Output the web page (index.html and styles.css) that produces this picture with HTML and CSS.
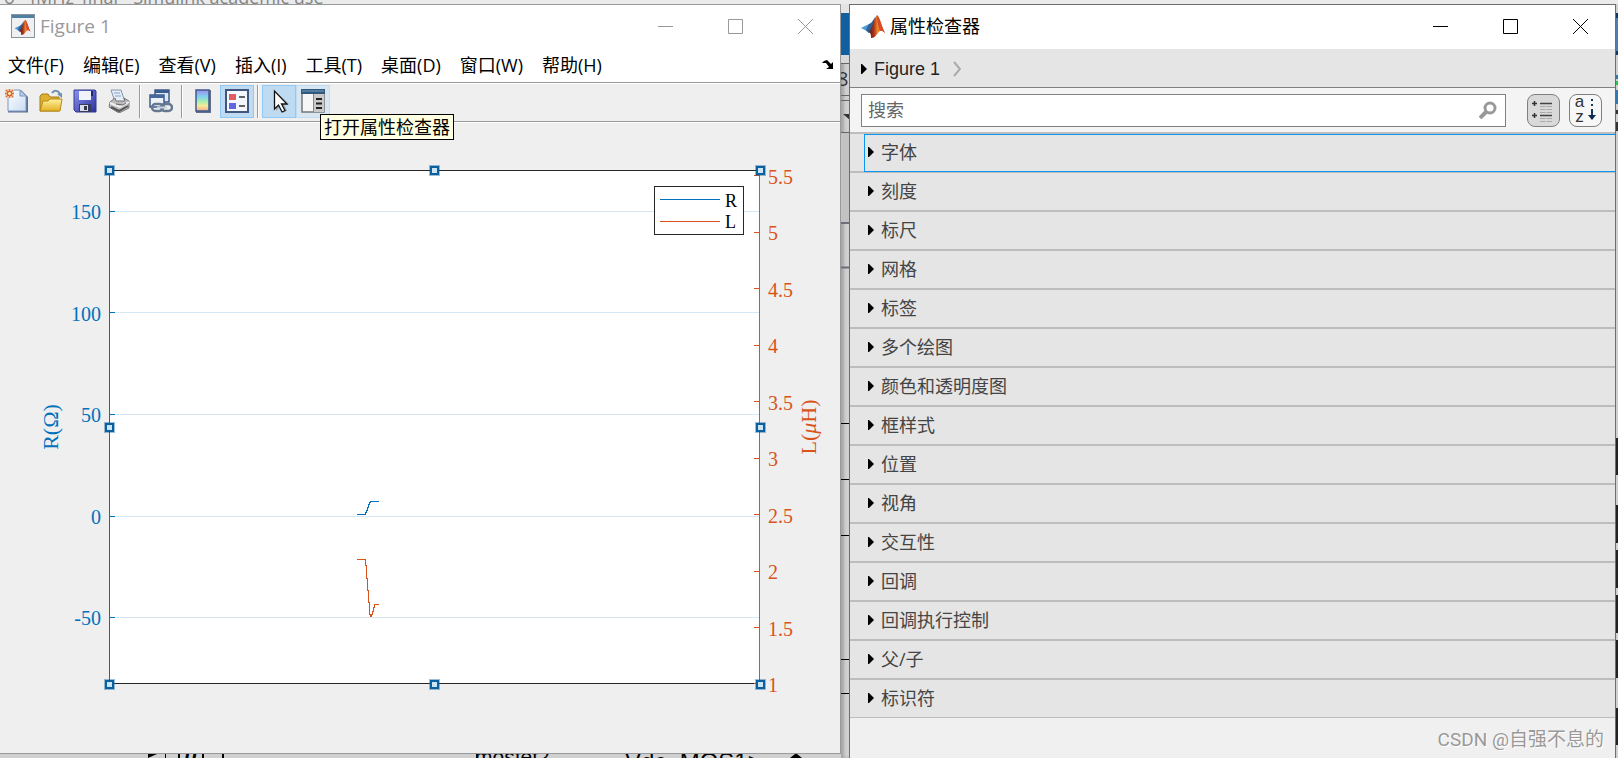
FILE: index.html
```html
<!DOCTYPE html>
<html lang="zh-CN">
<head>
<meta charset="utf-8">
<title>Figure 1</title>
<link rel="stylesheet" href="styles.css">
</head>
<body>
<svg class="defs" width="0" height="0" aria-hidden="true">
  <defs>
    <linearGradient id="flame" x1="0" x2="1" y1="0" y2="0">
      <stop offset="0" stop-color="#5a1a1a"/><stop offset=".3" stop-color="#a8321a"/><stop offset=".55" stop-color="#f08c28"/><stop offset="1" stop-color="#c8281e"/>
    </linearGradient>
    <linearGradient id="jet" x1="0" x2="0" y1="0" y2="1">
      <stop offset="0" stop-color="#a58bea"/><stop offset=".3" stop-color="#7fd0f0"/><stop offset=".55" stop-color="#a8eeb0"/><stop offset=".75" stop-color="#f5ec9a"/><stop offset="1" stop-color="#f5a98a"/>
    </linearGradient>
    <linearGradient id="paper" x1="0" x2="1" y1="0" y2="1">
      <stop offset="0" stop-color="#fff"/><stop offset="1" stop-color="#c9dcf6"/>
    </linearGradient>
    <linearGradient id="gold" x1="0" x2="0" y1="0" y2="1">
      <stop offset="0" stop-color="#fff3a0"/><stop offset="1" stop-color="#e5b021"/>
    </linearGradient>
    <linearGradient id="disk" x1="0" x2="1" y1="0" y2="1">
      <stop offset="0" stop-color="#8a93f0"/><stop offset="1" stop-color="#2c2f9c"/>
    </linearGradient>
    <symbol id="logo" viewBox="0 0 24 24">
      <path d="M0 14 8 10l4 4-4 5-4-3z" fill="#4a9bd4"/>
      <path d="M8 10c3-1 4-4 6-7l-1 10-5 6-3-3z" fill="#2f5f95"/>
      <path d="M8 18c3-3 5-14 8-17 3 2 5 13 8 18-3-3-5-3-7 0-2 3-4 5-7 5 0-3 0-4-2-6z" fill="url(#flame)"/>
      <path d="M16 1c3 2 5 13 8 18-3-3-4-3-5-2-2-5-3-11-3-16z" fill="#d94a2b"/>
    </symbol>
    <symbol id="tri" viewBox="0 0 7 12"><path d="M0 1h1l5 5-5 5H0z" fill="#000"/></symbol>
  </defs>
</svg>

<div class="desktop">
  <div class="strip-top">o - fMHz_final - Simulink academic use</div>

  <main class="window figure">
    <header class="titlebar">
      <svg class="app-icon" viewBox="0 0 24 24" aria-hidden="true">
        <rect x=".5" y=".5" width="23" height="23" fill="#eef0f2" stroke="#8b9299"/>
        <rect x="1" y="1" width="22" height="3" fill="#4f7fa3"/>
        <use href="#logo" x="3" y="5" width="17" height="16"/>
      </svg>
      <h1>Figure 1</h1>
      <div class="controls">
        <button aria-label="最小化"><svg viewBox="0 0 15 15"><path d="M0 7.5h15"/></svg></button>
        <button aria-label="最大化"><svg viewBox="0 0 15 15"><path d="M.5.5h14v14H.5z"/></svg></button>
        <button aria-label="关闭"><svg viewBox="0 0 15 15"><path d="m0 0 15 15M15 0 0 15"/></svg></button>
      </div>
    </header>
    <nav class="menu">
      <button>文件(F)</button><button>编辑(E)</button><button>查看(V)</button><button>插入(I)</button><button>工具(T)</button><button>桌面(D)</button><button>窗口(W)</button><button>帮助(H)</button>
      <button class="dock" aria-label="停靠"><svg viewBox="0 0 12 10"><path d="M0 3 2 1l3-1 4 4 2-2v7H4l3-2-3-4z" fill="#000"/></svg></button>
    </nav>
    <div class="toolbar">
      <button aria-label="新建图窗"><svg viewBox="0 0 24 24">
        <path d="M3 1h13l7 7v15.500H3z" fill="#5d7092"/><path d="M3 1h12l6 6v15H3z" fill="url(#paper)" stroke="#7e95bd"/><path d="M15 1v6h6z" fill="#b9cdea" stroke="#7e95bd"/>
        <path d="M0 0h9v9H0z" fill="#f6d3ba"/><path d="M4.500 0v9M0 4.500h9M1 1l7 7M8 1 1 8" stroke="#d4703c" stroke-width="1.300"/><circle cx="4.500" cy="4.500" r="2" fill="#fff0a8" stroke="#c8552a"/></svg></button>
      <button aria-label="打开"><svg viewBox="0 0 24 24">
        <path d="M13 4c2-3 6-3 8 1" fill="none" stroke="#6e8fae" stroke-width="2"/><path d="m18 5 5-1v5z" fill="#6e8fae"/>
        <path d="M1 22V7l2-2h6l2 3h9v14z" fill="#dfb02f" stroke="#a67c16"/><path d="M1 22 4 12h5l2-2h12l-2 12z" fill="url(#gold)" stroke="#b58a1c"/></svg></button>
      <button aria-label="保存"><svg viewBox="0 0 24 24">
        <path d="M1 1h21l1 1v21H3l-2-2z" fill="url(#disk)" stroke="#34388f"/><path d="M6 2h12v9H6z" fill="#f1f3fb"/><path d="M18 2h2v5h-2z" fill="#20246e"/><path d="M6 15h12v8H6z" fill="#343a5c"/><path d="M7 16h8v6H7z" fill="#dadde6"/><path d="M11 17h3v4h-3z" fill="#30354f"/></svg></button>
      <button aria-label="打印"><svg viewBox="0 0 24 24">
        <path d="M4 1h10l4 12H8z" fill="#e5edf9" stroke="#8794ad"/><path d="M7 4h6M8 7h6" stroke="#8aa0c6"/><path d="M3 13 8 9l1 3h9l-1-3 5 3v7l-10 5-10-6z" fill="#bcbcbc" stroke="#777"/><path d="m3 14 10 4 9-5" fill="none" stroke="#efefef" stroke-width="2"/><path d="m4 18 8 4 9-5" fill="none" stroke="#555" stroke-width="2"/><path d="m9 15 7 1 3-2" stroke="#666" fill="none"/></svg></button>
      <i class="sep"></i>
      <button aria-label="链接绘图"><svg viewBox="0 0 24 24">
        <path d="M6 1h14v12H6z" fill="#dfe7f2" stroke="#3c5c8c" stroke-width="1.500"/><path d="M6 1h14v3H6z" fill="#3c5c8c"/><path d="M1 6h14v12H1z" fill="#eef2f8" stroke="#3c5c8c" stroke-width="1.500"/><path d="M1 6h14v3H1z" fill="#47689a"/>
        <rect x="3" y="15" width="11" height="7" rx="3.500" fill="none" stroke="#66788f" stroke-width="2.500"/><rect x="12" y="15" width="11" height="7" rx="3.500" fill="none" stroke="#66788f" stroke-width="2.500"/><path d="M8 18.500h10" stroke="#c8d2de" stroke-width="2"/></svg></button>
      <i class="sep"></i>
      <button aria-label="插入颜色栏"><svg viewBox="0 0 24 24"><path d="M5 1h15v23H5z" fill="#62708f"/><path d="M5 1h13v21H5z" fill="url(#jet)" stroke="#40598c" stroke-width="1.500"/></svg></button>
      <button class="on" aria-label="插入图例"><svg viewBox="0 0 24 24"><path d="M1 1h22v22H1z" fill="#f3f6fc" stroke="#41567f" stroke-width="2"/><path d="M4 5h7v6H4z" fill="#e25a62"/><path d="M4 14h7v6H4z" fill="#6264e0"/><path d="M14 8h6M14 17h6" stroke="#333" stroke-width="1.500"/></svg></button>
      <i class="sep"></i>
      <button class="on" aria-label="编辑绘图"><svg viewBox="0 0 24 24"><path d="M9 3v19l4-4 3 6 4-2-3-7h5z" fill="#777" opacity=".5"/><path d="M7.500 2v18l4-4 3.500 7 3-1.500-3.500-6.500H20z" fill="#fff" stroke="#111" stroke-width="1.300"/></svg></button>
      <button class="hover" aria-label="打开属性检查器" aria-describedby="tip"><svg viewBox="0 0 24 24"><path d="M1 1h22v22H1z" fill="#f6f6f6" stroke="#777" stroke-width="1.500"/><path d="M0 0h24v5H0z" fill="#31597d"/><path d="M1 2h22" stroke="#78a1c0"/><path d="M12 5h11v18H12z" fill="#c9c9c9"/><path d="M12.500 5v18" stroke="#888"/><path d="M15 10h6M15 14.500h6M15 19h6" stroke="#222" stroke-width="1.800"/></svg></button>
      <div class="tooltip" id="tip" role="tooltip">打开属性检查器</div>
    </div>

    <svg class="chart" viewBox="0 0 840 630" role="img" aria-label="R 和 L 曲线">
      <rect x="109" y="47" width="650" height="513" fill="#fff"/>
      <g stroke="#d6e6f2" shape-rendering="crispEdges">
        <path d="M110 88.500h649M110 189.500h649M110 291.500h649M110 393.500h649M110 494.500h649"/>
      </g>
      <g fill="none" shape-rendering="crispEdges">
        <path d="M109 47.500h650M109 560.500h650" stroke="#262626"/>
        <path d="M109.500 48v512M109 88.500h6M109 189.500h6M109 291.500h6M109 393.500h6M109 494.500h6" stroke="#0072bd"/>
        <path d="M759.500 48v512M754 52.500h6M754 109.500h6M754 165.500h6M754 222.500h6M754 278.500h6M754 335.500h6M754 391.500h6M754 448.500h6M754 504.500h6M754 560.500h6" stroke="#d95319"/>
        <path d="M357 391.500h8.500v-2h1v-2h1v-3h1v-3h1v-2h1v-1h8.500" stroke="#0072bd"/>
        <path d="M357 436.500h8.500v6h1v13h1v12h1v12h1v12h1v2h1v-2h1v-3h1v-4h1v-3h4.500" stroke="#d95319"/>
      </g>
      <g class="tick blue" text-anchor="end">
        <text x="101" y="96">150</text><text x="101" y="198">100</text><text x="101" y="299">50</text><text x="101" y="401">0</text><text x="101" y="502">-50</text>
      </g>
      <g class="tick orange">
        <text x="768" y="61">5.5</text><text x="768" y="117">5</text><text x="768" y="174">4.5</text><text x="768" y="230">4</text><text x="768" y="287">3.5</text><text x="768" y="343">3</text><text x="768" y="400">2.5</text><text x="768" y="456">2</text><text x="768" y="513">1.5</text><text x="768" y="569">1</text>
      </g>
      <text class="axis blue" text-anchor="middle" transform="translate(58 304) rotate(-90)">R(Ω)</text>
      <text class="axis orange" text-anchor="middle" transform="translate(816 304) rotate(-90)">L(<tspan font-style="italic">μ</tspan>H)</text>
      <rect x="654.500" y="63.500" width="89" height="48" fill="#fff" stroke="#262626" shape-rendering="crispEdges"/>
      <path d="M660 76.500h60" stroke="#0072bd" shape-rendering="crispEdges"/>
      <path d="M660 98.500h60" stroke="#d95319" shape-rendering="crispEdges"/>
      <text class="legend" x="725" y="84">R</text><text class="legend" x="725" y="105">L</text>
      <g class="halo">
        <path d="M104 42h11v11h-11zM429 42h11v11h-11zM755 42h11v11h-11zM104 299h11v11h-11zM755 299h11v11h-11zM104 556h11v11h-11zM429 556h11v11h-11zM755 556h11v11h-11z"/>
      </g>
      <g class="handles">
        <rect x="106" y="44" width="7" height="7"/><rect x="431" y="44" width="7" height="7"/><rect x="757" y="44" width="7" height="7"/>
        <rect x="106" y="301" width="7" height="7"/><rect x="757" y="301" width="7" height="7"/>
        <rect x="106" y="558" width="7" height="7"/><rect x="431" y="558" width="7" height="7"/><rect x="757" y="558" width="7" height="7"/>
      </g>
    </svg>
  </main>

  <svg class="gutter" aria-hidden="true">
    <rect width="12" height="9" fill="#e4e4e4"/><rect y="9" width="12" height="42" fill="#105fa0"/><rect y="51" width="12" height="8" fill="#d8d8d8"/>
    <path d="M0 59.500h9M0 91.500h9M0 96.500h9M0 128.500h9" stroke="#666"/>
    <text x="-4" y="82" class="gutter-text">8</text><path d="M2 110h7v6z" fill="#333"/>
    <rect y="129" width="9" height="90" fill="#c2c2c2"/><path d="M0 219h9M0 263.500h9" stroke="#6b6f78" stroke-width="2"/>
    <path d="M0 419.500h9M0 475.500h9M0 531.500h9M0 655.500h9M0 689.500h9" stroke="#000"/>
  </svg>

  <aside class="window inspector">
    <header class="titlebar">
      <svg class="app-icon" aria-hidden="true"><use href="#logo"/></svg>
      <h2>属性检查器</h2>
      <div class="controls">
        <button aria-label="最小化"><svg viewBox="0 0 15 15"><path d="M0 7.500h15"/></svg></button>
        <button aria-label="最大化"><svg viewBox="0 0 15 15"><path d="M.5.5h14v14H.5z"/></svg></button>
        <button aria-label="关闭"><svg viewBox="0 0 15 15"><path d="m0 0 15 15M15 0 0 15"/></svg></button>
      </div>
    </header>
    <nav class="crumbs">
      <svg class="tri"><use href="#tri"/></svg><button>Figure 1</button>
      <svg class="chev" viewBox="0 0 8 16"><path d="m1 1 6 7-6 7" fill="none" stroke="#aaa" stroke-width="2"/></svg>
    </nav>
    <div class="search">
      <label class="field">
        <input type="text" placeholder="搜索" aria-label="搜索">
        <svg viewBox="0 0 18 18"><circle cx="11" cy="7" r="5" fill="none" stroke="#999" stroke-width="3"/><path d="m7 11-6 6" stroke="#999" stroke-width="4"/></svg>
      </label>
      <button class="tool pressed" aria-label="按类别"><svg viewBox="0 0 31 31"><path d="M4 8.500h5M6.500 6v5M4 20.500h5M6.500 18v5" stroke="#333" stroke-width="1.500"/><path d="M12 8.500h12M12 20.500h12" stroke="#444" stroke-width="1.500"/><path d="M12 11.500h12M12 14.500h12M12 17.500h12M12 23.500h12M12 26.500h12" stroke="#aaa" stroke-dasharray="5.500 1"/></svg></button>
      <button class="tool" aria-label="按字母"><span class="letters"><span>a</span><span>z</span></span><svg class="down" viewBox="0 0 8 22"><path d="M4 0v2M4 5v2M4 10v8" stroke="#123a5c" stroke-width="2"/><path d="M0 16h8l-4 5z" fill="#0b2c4a"/></svg></button>
    </div>
    <ul class="groups">
      <li><button class="current"><svg class="tri"><use href="#tri"/></svg>字体</button></li>
      <li><button><svg class="tri"><use href="#tri"/></svg>刻度</button></li>
      <li><button><svg class="tri"><use href="#tri"/></svg>标尺</button></li>
      <li><button><svg class="tri"><use href="#tri"/></svg>网格</button></li>
      <li><button><svg class="tri"><use href="#tri"/></svg>标签</button></li>
      <li><button><svg class="tri"><use href="#tri"/></svg>多个绘图</button></li>
      <li><button><svg class="tri"><use href="#tri"/></svg>颜色和透明度图</button></li>
      <li><button><svg class="tri"><use href="#tri"/></svg>框样式</button></li>
      <li><button><svg class="tri"><use href="#tri"/></svg>位置</button></li>
      <li><button><svg class="tri"><use href="#tri"/></svg>视角</button></li>
      <li><button><svg class="tri"><use href="#tri"/></svg>交互性</button></li>
      <li><button><svg class="tri"><use href="#tri"/></svg>回调</button></li>
      <li><button><svg class="tri"><use href="#tri"/></svg>回调执行控制</button></li>
      <li><button><svg class="tri"><use href="#tri"/></svg>父/子</button></li>
      <li><button><svg class="tri"><use href="#tri"/></svg>标识符</button></li>
    </ul>
    <footer class="watermark">CSDN @自强不息的</footer>
  </aside>

  <svg class="edge" aria-hidden="true">
    <rect y="9" width="2" height="42" fill="#0c3a66"/><rect y="14" width="2" height="33" fill="#4f7eae"/>
    <path d="M0 71h2v4H0zM0 86h2v14H0z" fill="#2f78b4"/><path d="M0 77h2v4H0z" fill="#2c4"/>
    <path d="M0 106h2v4H0zM0 118h2v9H0zM0 136h2M0 144h2" fill="#333"/>
    <path d="M0 434h2v37H0zM0 501h2v38H0zM0 546h2v38H0zM0 591h2v38H0zM0 636h2v38H0zM0 704h2v37H0z" fill="#222"/>
  </svg>

  <svg class="strip-bottom" aria-hidden="true">
    <path d="M148 0h9l-9 4zM165 0h1v4h-1zM178 0h2v4h-2zM202 0h2v4h-2zM222 0h2v4h-2zM476 0h2v4h-2zM790 4l5-4h2l5 4z" fill="#000"/>
    <text x="184" y="10" font-style="italic" font-weight="bold">u</text>
    <text x="475" y="10">mosfet2</text><text class="large" x="625" y="16">Vdc_MOS1&gt;</text>
  </svg>
</div>
</body>
</html>
```

FILE: styles.css
```css
* { box-sizing: border-box; }

body {
  margin: 0;
  overflow: hidden;
  background: #d0d0d0;
  color: #000;
  font: 18px/24px "Open Sans", "Noto Sans CJK SC", sans-serif;
}

button {
  margin: 0;
  padding: 0;
  border: 0;
  background: none;
  color: inherit;
  font: inherit;
}

.defs { position: absolute; }

.desktop {
  display: grid;
  grid-template-columns: minmax(0, 841fr) 8px minmax(0, 767fr) 2px;
  grid-template-rows: 4px minmax(0, 1fr) 4px;
  height: 100vh;
}

.strip-top {
  grid-column: 1 / -1;
  display: flex;
  align-items: flex-end;
  overflow: hidden;
  padding-left: 4px;
  background: #ebebeb;
  color: #858585;
  line-height: 14px;
  white-space: nowrap;
}

.gutter, .edge { grid-row: 2 / 4; width: 100%; height: 100%; }
.gutter { grid-column: 2; box-shadow: inset 3px 0 3px #0003; }
.edge { grid-column: 4; }
.gutter-text { font-size: 20px; fill: #333; }

.strip-bottom {
  grid-column: 1;
  grid-row: 3;
  width: 100%;
  height: 4px;
  font-family: "Liberation Sans", sans-serif;
  font-size: 21px;
}

.strip-bottom .large { font-size: 24px; }

.window { display: flex; flex-direction: column; min-width: 0; }

.figure {
  grid-column: 1;
  grid-row: 2;
  border: solid #999;
  border-width: 1px 1px 1px 0;
  background: #efefef;
}

.inspector {
  grid-column: 3;
  grid-row: 2 / 4;
  border: solid #6e6e6e;
  border-width: 1px 1px 0;
  background: #f0f0f0;
}

.titlebar {
  display: flex;
  align-items: center;
  height: 44px;
  padding: 0 0 2px 11px;
  background: #fff;
}

.titlebar h1, .titlebar h2 {
  flex: 1;
  margin: 0;
  font-size: 18px;
  font-weight: 400;
}

.app-icon { width: 24px; height: 24px; margin-right: 5px; }
.figure h1 { color: #999; font-size: 19px; }

.controls { display: flex; align-self: stretch; }
.controls button { display: grid; place-items: center; width: 70px; }
.controls svg { width: 15px; height: 15px; fill: none; stroke: #000; }
.figure .controls svg { stroke: #999; }

.menu {
  display: flex;
  align-items: center;
  gap: 19px;
  height: 34px;
  padding: 0 6px 2px 8px;
  border-bottom: 1px solid #999;
  background: #fff;
}

.dock { display: grid; margin-left: auto; }
.dock svg { width: 12px; height: 10px; }

.toolbar {
  position: relative;
  display: flex;
  align-items: center;
  height: 39px;
  padding-bottom: 2px;
  border-bottom: 1px solid #999;
  box-shadow: 0 1px #fff, inset 0 1px #fff;
}

.toolbar button {
  display: grid;
  place-items: center;
  width: 34px;
  height: 33px;
  border: 1px solid transparent;
}

.toolbar button svg { width: 24px; height: 24px; }
.toolbar .on { border-color: #90c8f6; background: #bfdbf2; }
.toolbar .hover { border-color: #c0dcf3; background: #d8e6f2; }
.sep { width: 2px; height: 33px; margin: 0 3px; border-left: 1px solid #999; border-right: 1px solid #fff; }

.tooltip {
  position: absolute;
  top: 31px;
  left: 320px;
  padding: 0 3px;
  border: 1px solid #000;
  background: #ffffe1;
  white-space: nowrap;
}

.chart { display: block; flex: 1; width: 100%; min-height: 0; margin-top: 1px; }
.tick { font: 20px "Liberation Serif", serif; }
.axis { font: 22px "Liberation Serif", serif; }
.blue { fill: #0072bd; }
.orange { fill: #d95319; }
.legend { font: 18px "Liberation Serif", serif; }
.handles { fill: #cce5f5; stroke: #0b609f; stroke-width: 2px; }
.halo { fill: #0b609f; opacity: .4; }

.crumbs {
  display: flex;
  align-items: center;
  height: 39px;
  padding: 1px 0 0 11px;
  border-bottom: 1px solid #808080;
  background: #e5e5e5;
  color: #222;
  font-family: "Liberation Sans", sans-serif;
}

.tri { width: 7px; height: 12px; margin-right: 6px; }
.chev { width: 8px; height: 16px; margin-left: 13px; }

.search {
  display: flex;
  align-items: center;
  gap: 9px;
  height: 44px;
  padding: 0 13px 0 11px;
  background: #f4f4f4;
}

.field {
  display: flex;
  flex: 1;
  align-items: center;
  height: 33px;
  margin-right: 12px;
  padding: 0 8px 0 6px;
  border: 1px solid #808080;
  background: #fff;
}

.field input { flex: 1; min-width: 0; padding: 0; border: 0; outline: 0; background: none; font: inherit; }
.field input::placeholder { color: #666; opacity: 1; }
.field svg { width: 18px; height: 18px; }

.tool {
  display: flex;
  align-items: center;
  justify-content: center;
  gap: 4px;
  width: 33px;
  height: 33px;
  border: 1px solid #808080;
  border-radius: 8px;
  background: #f7f7f7;
}

.tool svg { display: block; width: 31px; height: 31px; }
.tool .down { width: 8px; height: 22px; }
.tool.pressed { background: #d9d9d9; }

.letters {
  display: grid;
  padding-bottom: 3px;
  color: #333;
  font: 17px/15px "Liberation Sans", sans-serif;
}

.groups {
  margin: 0;
  padding: 0;
  border-bottom: 1px solid #bdbdbd;
  background: #e5e5e5;
  list-style: none;
}

.groups li { height: 39px; padding-left: 14px; border-top: 2px solid #bdbdbd; }

.groups button {
  display: flex;
  align-items: center;
  width: 100%;
  height: 37px;
  padding: 0 0 2px 4px;
  color: #444;
}

.groups .current {
  position: relative;
  height: 38px;
  border: solid #0a96f5;
  border-width: 1px 0 1px 1px;
  padding-left: 3px;
}

.watermark {
  margin: auto 11px 6px auto;
  color: #999;
  font-family: Roboto, "Noto Sans CJK SC", sans-serif;
  font-size: 19px;
  text-shadow: 1px 1px #fff;
}
```
